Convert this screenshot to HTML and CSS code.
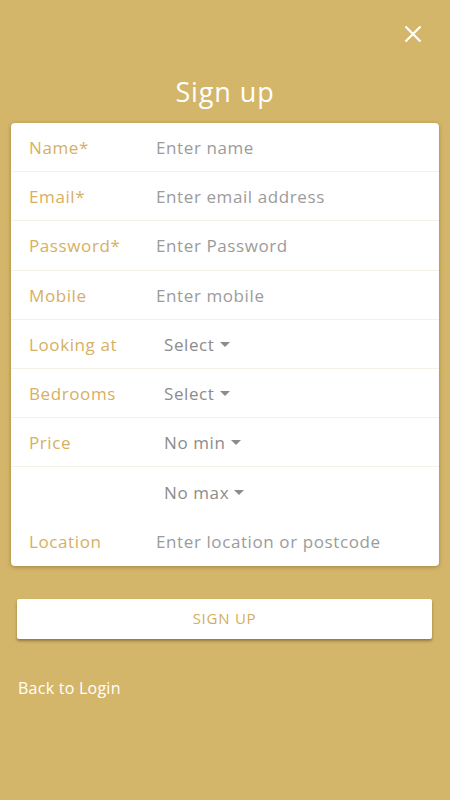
FILE: index.html
```html
<!DOCTYPE html>
<html lang="en">
<head>
<meta charset="utf-8">
<title>Sign up</title>
<link rel="stylesheet" href="styles.css">
</head>
<body>
<div class="screen">
  <div class="topbar">
    <button class="close" aria-label="Close">
      <svg width="18" height="18" viewBox="0 0 18 18"><path d="M1.5 1.5 L16.5 16.5 M16.5 1.5 L1.5 16.5" stroke="#fff" stroke-width="2.2" fill="none"/></svg>
    </button>
  </div>
  <h1 class="title">Sign up</h1>
  <div class="card">
    <div class="row"><span class="label">Name*</span><span class="input">Enter name</span></div>
    <div class="row"><span class="label">Email*</span><span class="input">Enter email address</span></div>
    <div class="row"><span class="label">Password*</span><span class="input">Enter Password</span></div>
    <div class="row"><span class="label">Mobile</span><span class="input">Enter mobile</span></div>
    <div class="row"><span class="label">Looking at</span><span class="select">Select<i class="caret"></i></span></div>
    <div class="row"><span class="label">Bedrooms</span><span class="select">Select<i class="caret"></i></span></div>
    <div class="row"><span class="label">Price</span><span class="select">No min<i class="caret"></i></span></div>
    <div class="row noline"><span class="label"></span><span class="select">No max<i class="caret"></i></span></div>
    <div class="row noline"><span class="label">Location</span><span class="input">Enter location or postcode</span></div>
  </div>
  <button class="signup">SIGN UP</button>
  <a class="back">Back to Login</a>
</div>
</body>
</html>
```
FILE: styles.css
```css
html, body {
  margin: 0;
  padding: 0;
}
body {
  background: #d4b66a;
  font-family: "Open Sans", "DejaVu Sans", sans-serif;
}
.screen {
  width: 450px;
  height: 800px;
  display: flex;
  flex-direction: column;
}
.topbar {
  height: 70px;
  display: flex;
  justify-content: flex-end;
  align-items: flex-start;
}
.close {
  margin: 25px 28px 0 0;
  padding: 0;
  border: 0;
  background: none;
  width: 18px;
  height: 18px;
  display: flex;
}
.title {
  margin: 0;
  height: 53px;
  text-align: center;
  color: #fff;
  font-weight: 400;
  font-size: 27px;
  line-height: 43px;
  letter-spacing: 0.9px;
}
.card {
  margin: 0 11px;
  background: #fff;
  border-radius: 4px;
  box-shadow: 0 1px 4px rgba(90, 70, 20, 0.45);
  display: flex;
  flex-direction: column;
}
.row {
  height: 49.2px;
  display: flex;
  align-items: center;
  padding-top: 1px;
  border-bottom: 1px solid #f6f1e6;
  box-sizing: border-box;
  font-size: 17px;
  letter-spacing: 0.6px;
}
.row.noline {
  border-bottom: 0;
}
.label {
  width: 127px;
  padding-left: 18px;
  color: #d6b062;
  flex: none;
}
.input {
  color: #9b9b9b;
}
.select {
  color: #8c8c8c;
  padding-left: 8px;
  display: flex;
  align-items: center;
}
.caret {
  display: inline-block;
  width: 0;
  height: 0;
  margin-left: 5px;
  border-left: 5px solid transparent;
  border-right: 5px solid transparent;
  border-top: 5px solid #8c8c8c;
}
.signup {
  margin: 33px 18px 0 17px;
  height: 40px;
  padding-bottom: 2px;
  background: #fff;
  border: 0;
  border-radius: 2px;
  box-shadow: 0 2px 3px rgba(90, 70, 20, 0.55);
  color: #d4ad5c;
  font-family: inherit;
  font-size: 15px;
  letter-spacing: 0.75px;
}
.back {
  margin: 38px 0 0 18px;
  color: #fff;
  font-size: 16px;
  letter-spacing: 0.25px;
}
```
